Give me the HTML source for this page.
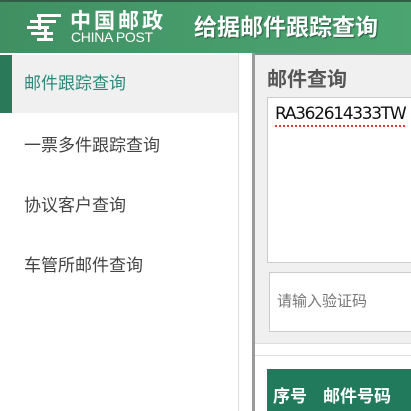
<!DOCTYPE html>
<html><head><meta charset="utf-8"><style>
*{margin:0;padding:0;box-sizing:border-box}
body{width:411px;height:411px;overflow:hidden;background:#fff;font-family:"Liberation Sans","Noto Sans CJK SC",sans-serif;position:relative}
.a{position:absolute}
</style></head><body>
<div class="a" style="left:0;top:0;width:411px;height:53px;background:linear-gradient(90deg,#3f8f62 0%,#46996a 40%,#4ba570 100%)"></div>
<div class="a" style="left:0;top:0;width:411px;height:2px;background:#2e5e45"></div>
<svg class="a" style="left:25px;top:12px" width="38" height="32" viewBox="0 0 38 32">
<g fill="#fff"><rect x="12" y="2" width="24" height="3"/><rect x="5" y="8" width="26" height="3"/><rect x="2" y="14" width="22" height="3"/><rect x="6" y="20" width="22" height="3"/><rect x="12" y="26" width="16" height="3"/><rect x="13" y="4" width="3" height="14"/><rect x="19" y="17" width="3" height="11"/></g></svg>
<div class="a" style="left:70px;top:8px;color:#fff;font-size:21px;font-weight:bold;letter-spacing:3px;line-height:24px;font-family:'Noto Sans CJK SC',sans-serif">中国邮政</div>
<div class="a" style="left:71px;top:30px;color:#fff;font-size:14px;line-height:15px;letter-spacing:-0.3px">CHINA POST</div>
<div class="a" style="left:194px;top:10px;color:#fff;font-size:23px;font-weight:bold;line-height:30px;font-family:'Noto Sans CJK SC',sans-serif;text-shadow:1px 1px 1px #2a5a40">给据邮件跟踪查询</div>
<div class="a" style="left:0;top:55px;width:238px;height:58px;background:#f0f0f0"></div>
<div class="a" style="left:0;top:55px;width:12px;height:58px;background:#2a7a5a"></div>
<div class="a" style="left:24px;top:71px;font-size:17px;color:#2a8a7a;font-family:'Noto Sans CJK SC',sans-serif;line-height:22px">邮件跟踪查询</div>
<div class="a" style="left:24px;top:133px;font-size:17px;color:#444;font-family:'Noto Sans CJK SC',sans-serif;line-height:22px">一票多件跟踪查询</div>
<div class="a" style="left:24px;top:193px;font-size:17px;color:#444;font-family:'Noto Sans CJK SC',sans-serif;line-height:22px">协议客户查询</div>
<div class="a" style="left:24px;top:253px;font-size:17px;color:#444;font-family:'Noto Sans CJK SC',sans-serif;line-height:22px">车管所邮件查询</div>
<div class="a" style="left:238px;top:53px;width:1px;height:358px;background:#ddd"></div>
<div class="a" style="left:252px;top:53px;width:3px;height:358px;background:#9a9a9a"></div>
<div class="a" style="left:255px;top:53px;width:156px;height:290px;background:#f0f0f0"></div>
<div class="a" style="left:255px;top:53px;width:156px;height:2px;background:#888"></div>
<div class="a" style="left:267px;top:64px;font-size:20px;font-weight:bold;color:#555;font-family:'Noto Sans CJK SC',sans-serif;line-height:28px">邮件查询</div>
<div class="a" style="left:267px;top:97px;width:150px;height:166px;background:#fff;border:1px solid #ccc"></div>
<div class="a" style="left:275px;top:103px;font-size:17px;color:#111;line-height:22px;font-family:'DejaVu Sans',sans-serif;letter-spacing:-1.3px">RA362614333TW</div>
<div class="a" style="left:275px;top:125px;width:130px;height:2px;border-bottom:2px dotted #e33"></div>
<div class="a" style="left:269px;top:272px;width:150px;height:60px;background:#fff;border:1px solid #ccc"></div>
<div class="a" style="left:277px;top:291px;font-size:15px;color:#777;font-family:'Noto Sans CJK SC',sans-serif;line-height:20px">请输入验证码</div>
<div class="a" style="left:255px;top:343px;width:156px;height:1px;background:#ddd"></div>
<div class="a" style="left:255px;top:355px;width:156px;height:1px;background:#ddd"></div>
<div class="a" style="left:267px;top:369px;width:144px;height:42px;background:#217a5c"></div>
<div class="a" style="left:273px;top:383px;font-size:17px;font-weight:bold;color:#fff;font-family:'Noto Sans CJK SC',sans-serif;line-height:24px;white-space:nowrap">序号<span style="display:inline-block;width:16px"></span>邮件号码</div>
</body></html>
